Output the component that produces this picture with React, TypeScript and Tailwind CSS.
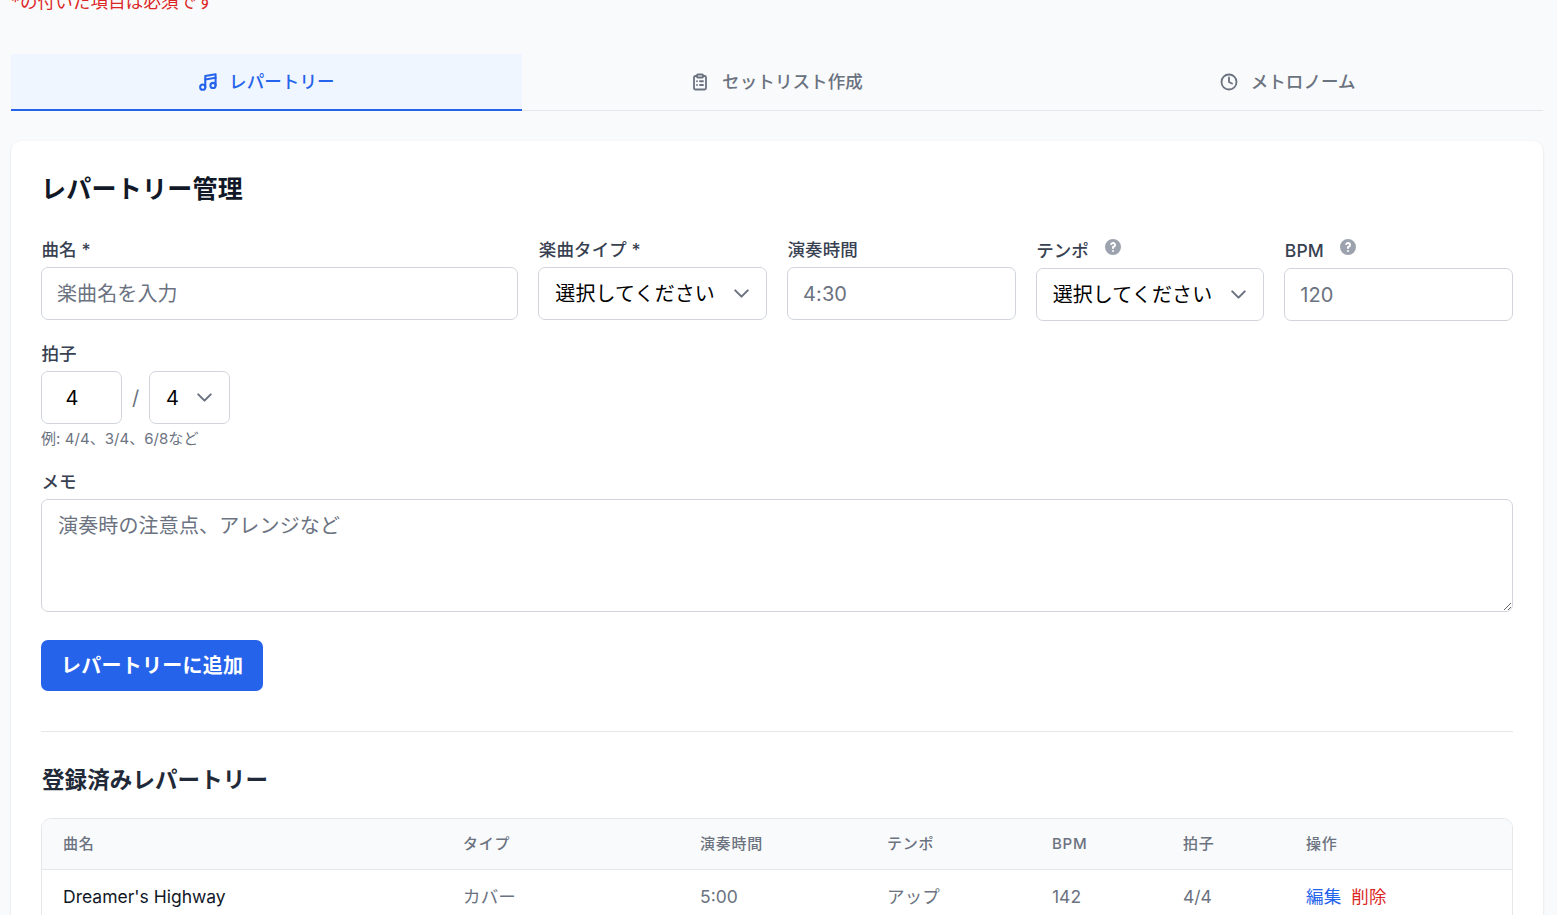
import { ChevronDown, Clock, ClipboardList } from "lucide-react";
import { HiQuestionMarkCircle } from "react-icons/hi";

const labelCls = "block text-[17.5px] leading-[25px] font-medium text-[#374151] pl-[0.5px] tracking-[0.1px]";
const inputCls =
  "w-full h-[53px] px-[15px] rounded-[7px] border border-[#d1d5db] bg-white text-[20px] text-black tracking-[0.1px] placeholder:text-[#6b7280] outline-none";

const MusicIcon = () => (
  <svg width="18" height="18" viewBox="-0.5 1.5 21 21" className="overflow-visible" fill="none" stroke="currentColor" strokeWidth="2.4" strokeLinecap="round" strokeLinejoin="round">
    <path d="M8 18V5l12-2v13" />
    <path d="M8 9l12-2" />
    <circle cx="5" cy="18" r="3" />
    <circle cx="17" cy="16" r="3" />
  </svg>
);

const Select = ({ value, className }: { value: string; className?: string }) => (
  <div className={`relative ${className ?? ""}`}>
    <select
      defaultValue={value}
      className="w-full h-[53px] pl-[16px] pr-[40px] appearance-none rounded-[7px] border border-[#d1d5db] bg-white text-[20px] text-black tracking-[0.1px] outline-none"
    >
      <option>{value}</option>
    </select>
    <ChevronDown size={25} strokeWidth={2} className="absolute right-[13px] top-[14px] text-[#6b7280] pointer-events-none" />
  </div>
);

const Help = () => <HiQuestionMarkCircle size={20} className="text-[#9ca3af] ml-[14px] mb-[6px]" />;

const Tab = ({ active, icon, label }: { active?: boolean; icon: React.ReactNode; label: string }) => (
  <button
    className={`flex-1 h-[57px] flex items-center justify-center gap-[13px] text-[17.5px] font-medium tracking-[0.1px] border-b-[2.5px] ${
      active ? "bg-[#eff6ff] text-[#2563eb] border-[#2563eb]" : "text-[#6b7280] border-transparent"
    }`}
  >
    {icon}
    <span className="pt-[2px]">{label}</span>
  </button>
);

const headers = ["曲名", "タイプ", "演奏時間", "テンポ", "BPM", "拍子", "操作"];

export default function App() {
  return (
    <div
      className="h-[915px] overflow-hidden bg-[#f9fafb] pl-[11px] pr-[14px]"
      style={{ fontFamily: 'Inter, "Noto Sans CJK JP", sans-serif' }}
    >
      <p className="-mt-[11px] h-[65px] text-[17.5px] leading-[25px] text-[#dc2626] tracking-[0.15px]">*の付いた項目は必須です</p>

      <div className="flex border-b-[1.25px] border-[#e5e7eb] h-[57px]">
        <Tab active icon={<MusicIcon />} label="レパートリー" />
        <Tab icon={<ClipboardList size={18} strokeWidth={2.4} />} label="セットリスト作成" />
        <Tab icon={<Clock size={18} strokeWidth={2.4} />} label="メトロノーム" />
      </div>

      <div className="mt-[30px] bg-white rounded-[10px] shadow-sm px-[30px] pt-[31px]">
        <h2 className="text-[25px] leading-[35px] font-bold text-[#111827] tracking-[0.25px]">レパートリー管理</h2>

        <div className="mt-[30px] grid grid-cols-6 gap-x-[20px]">
          <div className="col-span-2">
            <label className={labelCls}>曲名 *</label>
            <input className={`${inputCls} mt-[5px]`} placeholder="楽曲名を入力" />
          </div>
          <div>
            <label className={labelCls}>楽曲タイプ *</label>
            <Select value="選択してください" className="mt-[5px]" />
          </div>
          <div>
            <label className={labelCls}>演奏時間</label>
            <input className={`${inputCls} mt-[5px]`} placeholder="4:30" />
          </div>
          <div>
            <label className={`${labelCls} flex items-center h-[26px]`}>
              テンポ
              <Help />
            </label>
            <Select value="選択してください" className="mt-[5px]" />
          </div>
          <div>
            <label className={`${labelCls} flex items-center h-[26px]`}>
              BPM
              <Help />
            </label>
            <input className={`${inputCls} mt-[5px]`} placeholder="120" />
          </div>
        </div>

        <div className="mt-[20px]">
          <label className={labelCls}>拍子</label>
          <div className="mt-[5px] flex items-center">
            <input className={`${inputCls} !w-[81px] !px-[23.5px]`} defaultValue="4" />
            <span className="w-[27px] text-center text-[20px] text-[#6b7280]">/</span>
            <Select value="4" className="w-[81px]" />
          </div>
          <p className="mt-[5px] text-[15px] leading-[20px] text-[#6b7280] tracking-[0.05px]">例: 4/4、3/4、6/8など</p>
        </div>

        <div className="mt-[20px]">
          <label className={labelCls}>メモ</label>
          <textarea
            className="mt-[5px] block w-full h-[113px] px-[16px] py-[11px] rounded-[7px] border border-[#d1d5db] bg-white text-[20px] text-black tracking-[0.15px] placeholder:text-[#6b7280] outline-none"
            placeholder="演奏時の注意点、アレンジなど"
          />
        </div>

        <button className="mt-[28px] h-[51px] px-[20px] rounded-[7px] bg-[#2563eb] text-white text-[20px] font-semibold tracking-[0.25px] block">
          レパートリーに追加
        </button>

        <div className="mt-[40px] border-t border-[#e5e7eb] pt-[30px]">
          <h3 className="text-[22.5px] leading-[35px] font-semibold text-[#1f2937] pl-[1px] tracking-[0.1px]">登録済みレパートリー</h3>

          <div className="mt-[21px] border border-[#e5e7eb] rounded-[10px] overflow-hidden">
            <table className="w-full table-fixed">
              <colgroup>
                <col className="w-[400px]" />
                <col className="w-[237px]" />
                <col className="w-[187px]" />
                <col className="w-[165px]" />
                <col className="w-[131px]" />
                <col className="w-[123px]" />
                <col />
              </colgroup>
              <thead className="bg-[#f9fafb] border-b border-[#e5e7eb]">
                <tr>
                  {headers.map((h) => (
                    <th key={h} className="h-[50px] px-[21px] text-left text-[15px] font-medium tracking-wider text-[#6b7280]">
                      {h}
                    </th>
                  ))}
                </tr>
              </thead>
              <tbody>
                <tr className="text-[17.5px] text-[#6b7280]">
                  <td className="h-[55px] px-[21px] text-[#111827]">Dreamer's Highway</td>
                  <td className="px-[21px] tracking-[0.15px]">カバー</td>
                  <td className="px-[21px]">5:00</td>
                  <td className="px-[21px] tracking-[0.15px]">アップ</td>
                  <td className="px-[21px]">142</td>
                  <td className="px-[21px]">4/4</td>
                  <td className="px-[21px] tracking-[0.15px]">
                    <span className="text-[#2563eb] mr-[10px]">編集</span>
                    <span className="text-[#dc2626]">削除</span>
                  </td>
                </tr>
              </tbody>
            </table>
          </div>
        </div>
      </div>
    </div>
  );
}
